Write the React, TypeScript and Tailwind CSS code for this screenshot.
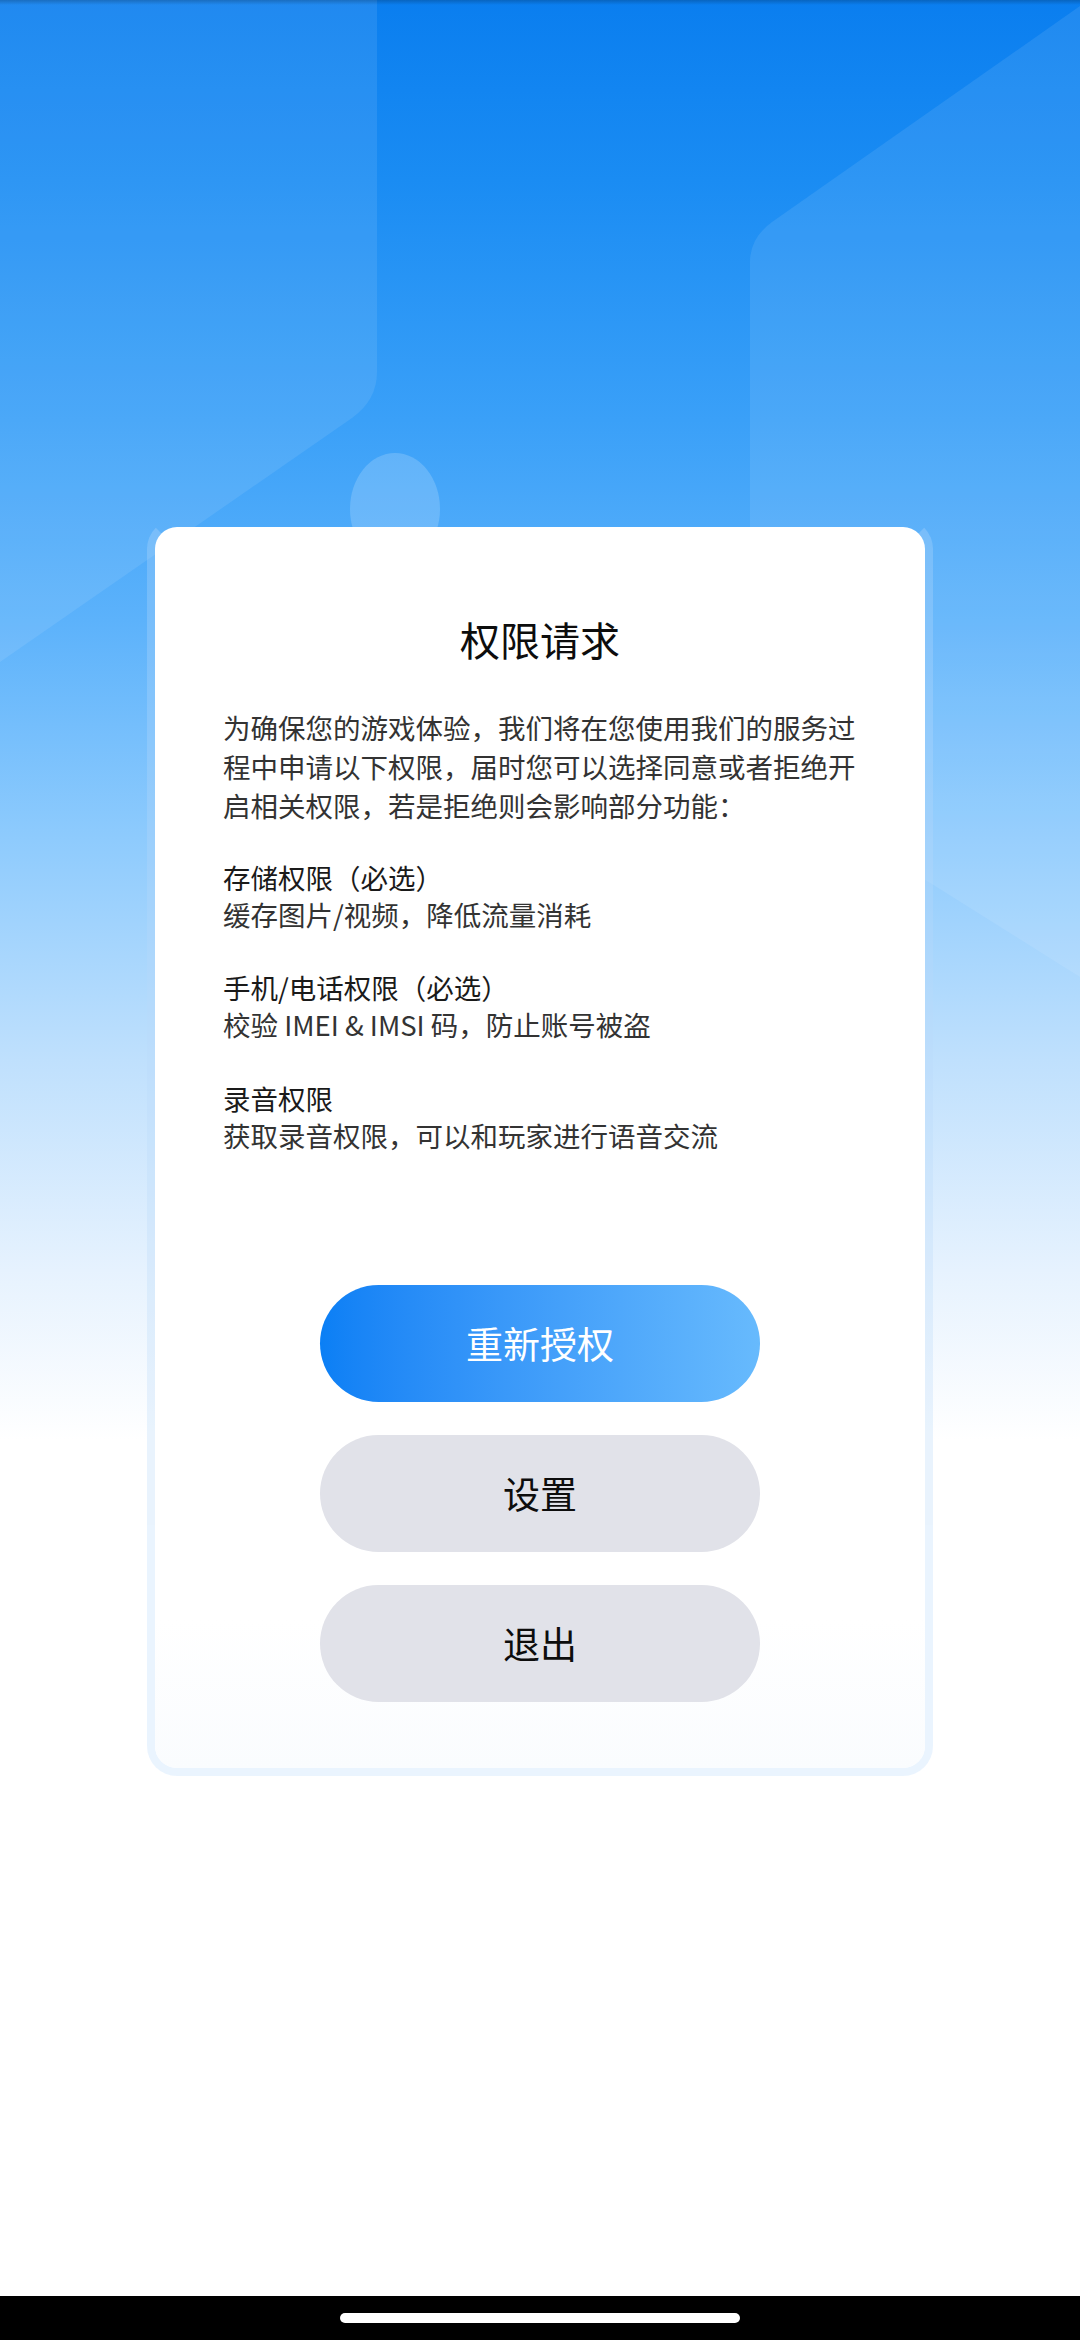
const FONT = "font-['Noto_Sans_CJK_SC','Noto_Sans',sans-serif]";

const SECTIONS = [
  { title: '存储权限（必选）', desc: '缓存图片/视频，降低流量消耗', gap: 'mt-[34px]' },
  { title: '手机/电话权限（必选）', desc: '校验 IMEI & IMSI 码，防止账号被盗', gap: 'mt-[36px]' },
  { title: '录音权限', desc: '获取录音权限，可以和玩家进行语音交流', gap: 'mt-[37px]' },
];

// ── Background drawing ─────────────────────────────────────────────────────────
function Backdrop() {
  return (
    <div className="absolute inset-x-0 top-0 h-[1460px] bg-[linear-gradient(180deg,#0a7eef_0px,#1a8cf3_180px,#3aa0f8_420px,#5cb2fb_620px,#8ccafd_830px,#bfe0fd_1060px,#e6f2fe_1270px,#ffffff_1440px)]">
      <svg width="1080" height="1460" viewBox="0 0 1080 1460" className="absolute inset-0">
        {/* left panel */}
        <path
          d="M0 0 H377 V372 Q377 400 352 418 L0 662 Z"
          fill="#ffffff"
          fillOpacity="0.09"
        />
        {/* right panel */}
        <path
          d="M750 262 Q750 238 772 222 L1080 6 V977 L750 770 Z"
          fill="#ffffff"
          fillOpacity="0.09"
        />
        {/* bubble */}
        <ellipse cx="395" cy="509" rx="45" ry="56" fill="#ffffff" fillOpacity="0.18" />
      </svg>
      <div className="absolute inset-x-0 top-0 h-[5px] bg-gradient-to-b from-black/20 to-transparent" />
    </div>
  );
}

export default function App() {
  return (
    <div className={`relative w-[1080px] h-[2340px] overflow-hidden bg-white ${FONT}`}>
      <Backdrop />

      <div className="relative flex flex-col h-full">
        {/* ── Card ── */}
        <div className="mt-[519px] mx-auto w-[786px] rounded-[30px] border-[8px] border-[rgba(186,218,250,0.3)] border-t-transparent">
          <div className="bg-[linear-gradient(180deg,#ffffff_0%,#ffffff_88%,#fafcfe_100%)] rounded-[22px] pt-[84px] px-[68px] pb-[66px]">
            <h1 className="text-center text-[40px] leading-[56px] text-[#0d0d0d]">权限请求</h1>

            <p className="mt-[41px] text-[27.5px] leading-[39px] text-[#333]">
              为确保您的游戏体验，我们将在您使用我们的服务过程中申请以下权限，届时您可以选择同意或者拒绝开启相关权限，若是拒绝则会影响部分功能：
            </p>

            {SECTIONS.map(s => (
              <div key={s.title} className={s.gap}>
                <p className="text-[27.5px] leading-[37px] text-[#1a1a1a]">{s.title}</p>
                <p className="text-[27.5px] leading-[37px] text-[#333]">{s.desc}</p>
              </div>
            ))}

            {/* ── Buttons ── */}
            <div className="mt-[131px] flex flex-col items-center gap-[33px]">
              <button className="w-[440px] h-[117px] rounded-full bg-gradient-to-r from-[#0a7ff5] to-[#67bafd] text-white text-[37px]">
                重新授权
              </button>
              <button className="w-[440px] h-[117px] rounded-full bg-[#e1e2e9] text-[#0d0d0d] text-[37px]">
                设置
              </button>
              <button className="w-[440px] h-[117px] rounded-full bg-[#e1e2e9] text-[#0d0d0d] text-[37px]">
                退出
              </button>
            </div>
          </div>
        </div>

        <div className="flex-1" />

        {/* ── Gesture bar ── */}
        <div className="h-[44px] bg-black flex items-center justify-center">
          <div className="w-[400px] h-[10px] rounded-full bg-white" />
        </div>
      </div>
    </div>
  );
}
